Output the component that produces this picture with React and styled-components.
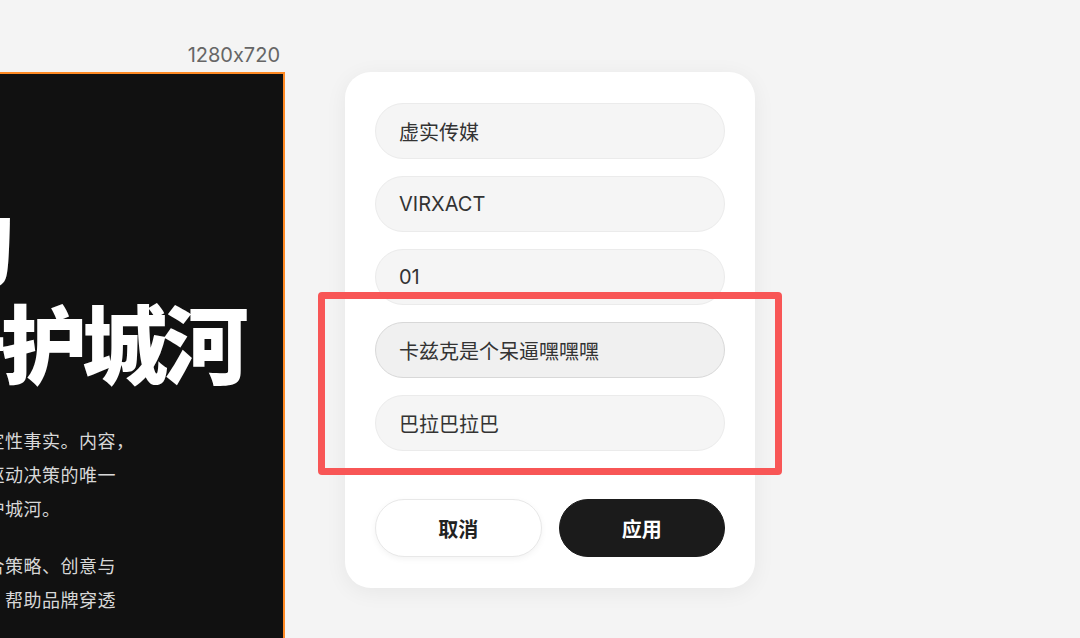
import styled, { createGlobalStyle } from 'styled-components';

const GlobalStyle = createGlobalStyle`
    html, body {
        margin: 0;
        height: 100%;
        overflow: hidden;
        background: #f4f4f4;
    }
    body {
        font-family: "Inter", "Noto Sans CJK SC", sans-serif;
    }
`

const fields = [
    { value: '虚实传媒' },
    { value: 'VIRXACT' },
    { value: '01' },
    { value: '卡兹克是个呆逼嘿嘿嘿', active: true },
    { value: '巴拉巴拉巴' },
]

const App = () => {
    return (
        <Page>
            <GlobalStyle />
            <PreviewColumn>
                <SizeLabel>1280x720</SizeLabel>
                <Slide>
                    <SlideContent>
                        <Headline>
                            <span>数字时代的</span>
                            <span>内容是唯一护城河</span>
                        </Headline>
                        <Paragraph>
                            <span>传播的终点是确定性事实。内容，</span>
                            <span>沉淀品牌信任、驱动决策的唯一</span>
                            <span>也是品牌真正的护城河。</span>
                        </Paragraph>
                        <Paragraph>
                            <span>虚实传媒始终融合策略、创意与</span>
                            <span>数据技术的力量，帮助品牌穿透</span>
                        </Paragraph>
                    </SlideContent>
                </Slide>
            </PreviewColumn>

            <Card>
                <FieldList>
                    {fields.map((f, i) => (
                        <Field key={i} $active={f.active} value={f.value} readOnly />
                    ))}
                </FieldList>
                <Actions>
                    <ActionButton>取消</ActionButton>
                    <ActionButton $primary>应用</ActionButton>
                </Actions>
                <Highlight />
            </Card>
        </Page>
    )
}

export default App;

const Page = styled.div`
    display: flex;
    align-items: flex-start;
    gap: 60px;
    height: 638px;
    padding-top: 44px;
    box-sizing: border-box;
`

const PreviewColumn = styled.div`
    width: 285px;
    flex-shrink: 0;
    display: flex;
    flex-direction: column;
    align-items: flex-end;
`

const SizeLabel = styled.div`
    font-family: "Inter", sans-serif;
    font-feature-settings: "calt" 0;
    font-size: 20px;
    line-height: 22px;
    color: #666;
    margin-right: 5px;
`

const Slide = styled.div`
    margin-top: 6px;
    width: 100%;
    height: 620px;
    background: #111;
    border-top: 2px solid #ff8a24;
    border-right: 2px solid #ff8a24;
    box-sizing: border-box;
    overflow: hidden;
`

const SlideContent = styled.div`
    margin-left: -404px;
    padding-top: 118px;
    white-space: nowrap;
    font-family: "Noto Sans CJK SC", sans-serif;
`

const Headline = styled.h1`
    margin: 0;
    display: flex;
    flex-direction: column;
    font-size: 86px;
    line-height: 99px;
    font-weight: 900;
    letter-spacing: -5px;
    color: #fff;

    & > span:first-child {
        letter-spacing: -3px;
    }
`

const Paragraph = styled.p`
    margin: 33px 0 0 261px;
    display: flex;
    flex-direction: column;
    font-size: 18px;
    line-height: 34px;
    letter-spacing: 0.5px;
    color: #d8d8d8;

    & + & {
        margin-top: 23px;
    }
`

const Card = styled.div`
    position: relative;
    margin-top: 28px;
    width: 410px;
    box-sizing: border-box;
    padding: 31px 30px;
    background: #fff;
    border-radius: 26px;
    box-shadow: 0 4px 22px rgba(0, 0, 0, 0.06);
    display: flex;
    flex-direction: column;
    gap: 48px;
`

const FieldList = styled.div`
    display: flex;
    flex-direction: column;
    gap: 17px;
`

const Field = styled.input`
    height: 56px;
    box-sizing: border-box;
    padding: 0 23px;
    border-radius: 28px;
    border: 1px solid ${p => (p.$active ? '#d8d8d8' : '#ebebeb')};
    background: ${p => (p.$active ? '#f0f0f0' : '#f5f5f5')};
    font-family: "Inter", "Noto Sans CJK SC", sans-serif;
    font-size: 20px;
    color: #333;
    outline: none;
`

const Actions = styled.div`
    display: grid;
    grid-template-columns: 1fr 1fr;
    gap: 17px;
`

const ActionButton = styled.button`
    height: 58px;
    border-radius: 29px;
    font-family: "Noto Sans CJK SC", sans-serif;
    font-size: 20px;
    font-weight: 700;
    cursor: pointer;
    border: 1px solid ${p => (p.$primary ? '#1b1b1b' : '#e8e8e8')};
    background: ${p => (p.$primary ? '#1b1b1b' : '#fff')};
    color: ${p => (p.$primary ? '#fff' : '#222')};
    box-shadow: ${p => (p.$primary ? 'none' : '0 2px 6px rgba(0, 0, 0, 0.05)')};
`

// annotation frame drawn over the last two fields
const Highlight = styled.div`
    position: absolute;
    left: -27px;
    top: 220px;
    width: 464px;
    height: 183px;
    box-sizing: border-box;
    border: 7px solid #f85656;
    border-radius: 4px;
    pointer-events: none;
`
